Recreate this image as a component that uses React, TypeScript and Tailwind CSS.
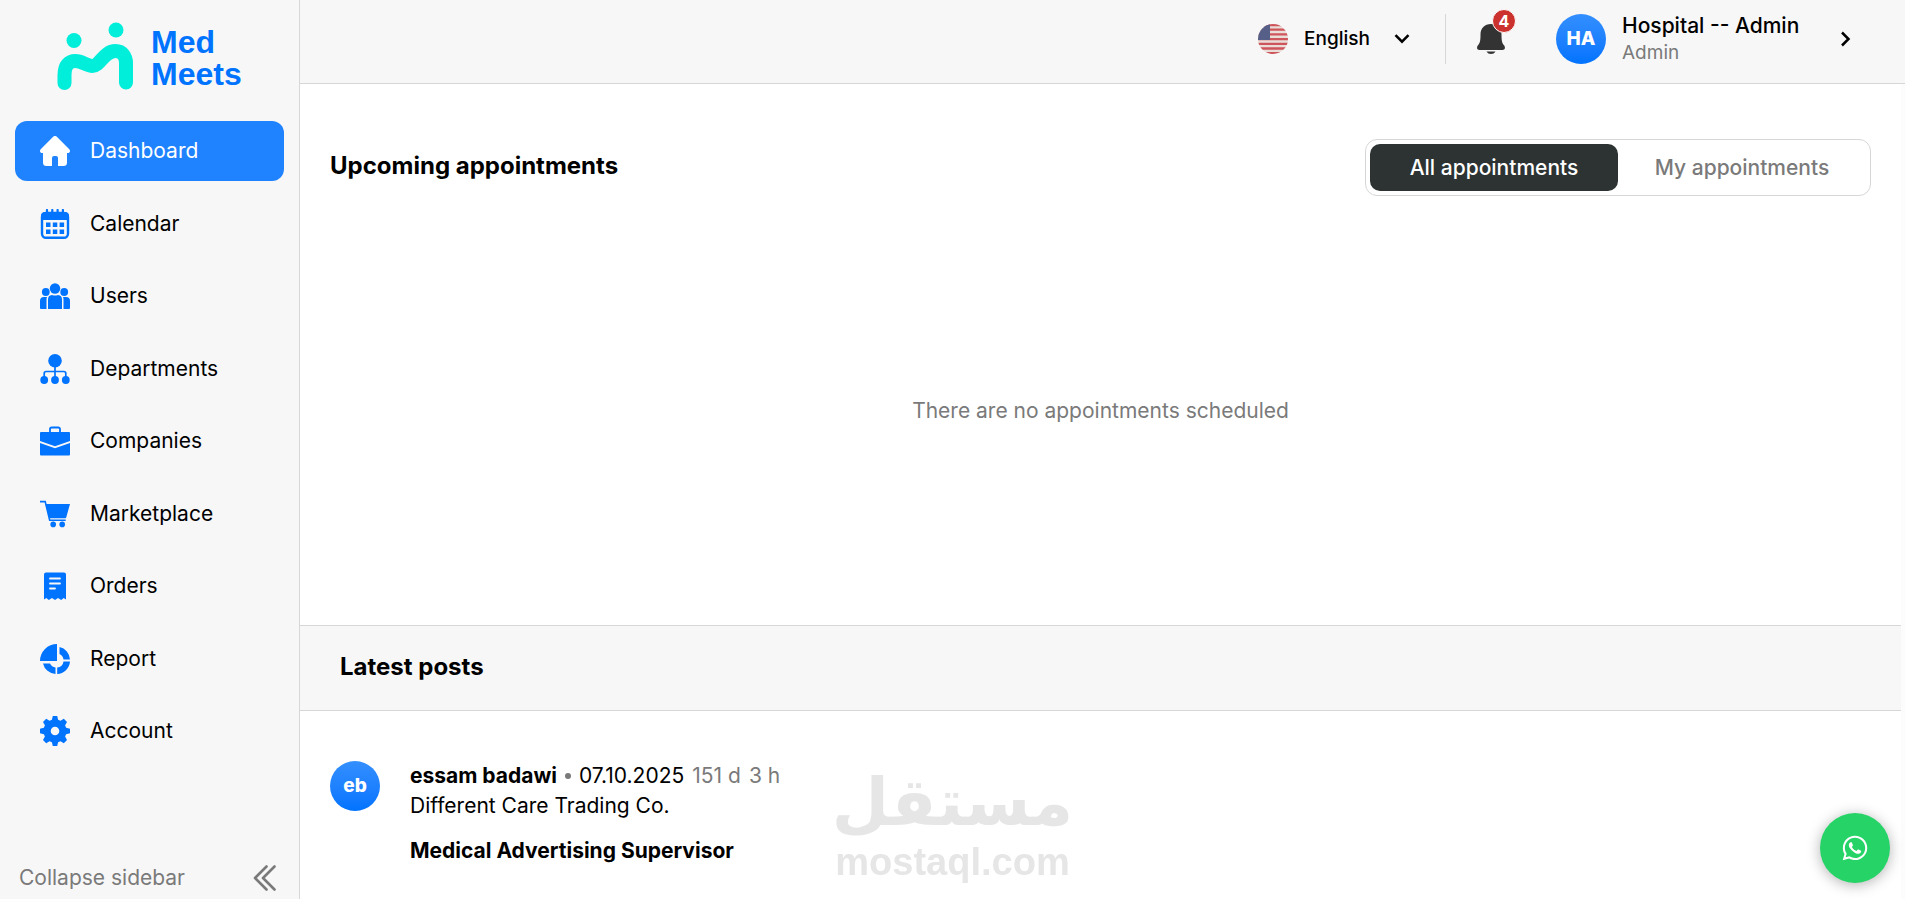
import { useState, type ReactNode } from "react";
import clsx from "clsx";
import { FaWhatsapp } from "react-icons/fa";

type NavItem = {
  id: string;
  label: string;
  icon: ReactNode;
};

type Post = {
  id: number;
  initials: string;
  author: string;
  date: string;
  age: string[];
  company: string;
  title: string;
};

type Tab = "all" | "my";

const tabs: { id: Tab; label: string }[] = [
  { id: "all", label: "All appointments" },
  { id: "my", label: "My appointments" },
];

const posts: Post[] = [
  {
    id: 1,
    initials: "eb",
    author: "essam badawi",
    date: "07.10.2025",
    age: ["151 d", "3 h"],
    company: "Different Care Trading Co.",
    title: "Medical Advertising Supervisor",
  },
];

function Icon({ children }: { children: ReactNode }) {
  return (
    <svg viewBox="0 0 30 30" className="size-[30px] shrink-0" fill="currentColor" aria-hidden="true">
      {children}
    </svg>
  );
}

const navItems: NavItem[] = [
  {
    id: "dashboard",
    label: "Dashboard",
    icon: (
      <Icon>
        <path d="M12.9 1a3 3 0 0 1 4.2 0L29.3 13.3c1.5 1.5.5 3.7-1.5 3.7H27v9.5a3.5 3.5 0 0 1-3.5 3.5H18v-8a2 2 0 0 0-2-2h-2a2 2 0 0 0-2 2v8H6.5A3.5 3.5 0 0 1 3 26.5V17h-.8c-2 0-3-2.2-1.5-3.7z" />
      </Icon>
    ),
  },
  {
    id: "calendar",
    label: "Calendar",
    icon: (
      <Icon>
        <path d="M7 1v4M12.3 1v4M17.6 1v4M22.9 1v4" stroke="currentColor" strokeWidth="2.2" strokeLinecap="round" />
        <rect x="2" y="4" width="26" height="24.8" rx="4" fill="none" stroke="currentColor" strokeWidth="2.4" />
        <path d="M1 11V7a4 4 0 0 1 4-4h20a4 4 0 0 1 4 4v4z" />
        <path d="M6 13.5h4.5v4.5H6zM12.8 13.5h4.5v4.500h-4.500zM19.600 13.500h4.500v4.500h-4.500zM6 20.500h4.500v4.500H6zM12.800 20.500h4.500v4.500h-4.500zM19.600 20.500h4.500v4.500h-4.500z" />
      </Icon>
    ),
  },
  {
    id: "users",
    label: "Users",
    icon: (
      <Icon>
        <circle cx="15" cy="7.5" r="5.2" />
        <circle cx="5.8" cy="11" r="3.9" />
        <circle cx="24.2" cy="11" r="3.9" />
        <path d="M8 28V18.5a4.5 4.5 0 0 1 4-4.5c2 .8 4 .8 6 0a4.5 4.5 0 0 1 4 4.5V28zM6.5 28H1a1 1 0 0 1-1-1v-7a4 4 0 0 1 4-4h3a6 6 0 0 0-.5 2.5zM23.5 28H29a1 1 0 0 0 1-1v-7a4 4 0 0 0-4-4h-3a6 6 0 0 1 .5 2.5z" />
      </Icon>
    ),
  },
  {
    id: "departments",
    label: "Departments",
    icon: (
      <Icon>
        <circle cx="15" cy="6.8" r="6.8" />
        <path d="M15 12v13M4.2 24v-4.5a2 2 0 0 1 2-2h17.6a2 2 0 0 1 2 2V24" fill="none" stroke="currentColor" strokeWidth="1.7" />
        <circle cx="4.2" cy="26" r="3.9" />
        <circle cx="15" cy="26" r="3.9" />
        <circle cx="25.8" cy="26" r="3.9" />
      </Icon>
    ),
  },
  {
    id: "companies",
    label: "Companies",
    icon: (
      <Icon>
        <path d="M10 7V3.2a1.7 1.7 0 0 1 1.7-1.7h6.6A1.7 1.7 0 0 1 20 3.2V7" fill="none" stroke="currentColor" strokeWidth="1.8" />
        <path d="M1 6h28a1 1 0 0 1 1 1v8l-15 5.2L0 15V7a1 1 0 0 1 1-1zM0 17l15 5.2L30 17v11.5a1 1 0 0 1-1 1H1a1 1 0 0 1-1-1z" />
      </Icon>
    ),
  },
  {
    id: "marketplace",
    label: "Marketplace",
    icon: (
      <Icon>
        <path d="M0 2.6h5.2l4.5 18.7h16" fill="none" stroke="currentColor" strokeWidth="1.6" />
        <path d="M5.5 5H30l-3.8 13.5a1 1 0 0 1-1 .8H9.5z" />
        <circle cx="13.2" cy="25.4" r="2.8" />
        <circle cx="22.2" cy="25.4" r="2.8" />
      </Icon>
    ),
  },
  {
    id: "orders",
    label: "Orders",
    icon: (
      <Icon>
        <path d="M6 1.5h18a2 2 0 0 1 2 2v25l-2.3-1.6-2.5 2-3.2-2-3 2-3-2-3.2 2-2.5-2L4 28.5v-25a2 2 0 0 1 2-2z" />
        <path d="M10 7.5h10M10 12.5h10M10 17.5h5" stroke="#f7f7f7" strokeWidth="1.8" strokeLinecap="round" />
      </Icon>
    ),
  },
  {
    id: "report",
    label: "Report",
    icon: (
      <Icon>
        <path d="M17 0v17H0A17 17 0 0 1 17 0z" />
        <path d="M19.5 3A13.5 13.5 0 0 1 30 15.5h-6.5A7 7 0 0 0 19.5 10zM30 17.5A13.5 13.5 0 0 1 17.2 30v-6.5a7 7 0 0 0 6.3-6zM15.500 30A13.500 13.500 0 0 1 3 19.500h7a7 7 0 0 0 5.500 4z" />
      </Icon>
    ),
  },
  {
    id: "account",
    label: "Account",
    icon: (
      <Icon>
        <path
          fillRule="evenodd"
          d="M12.8 0h4.4l.9 3.8 2.4 1 3.3-2L27 5.9l-1.900 3.400 1 2.500 3.900 1v4.400l-3.900 1-1 2.400 1.900 3.500-3.200 3.100-3.300-2-2.400 1-.9 3.800h-4.400l-.9-3.800-2.400-1-3.300 2L3 24.100l1.900-3.500-1-2.400-3.900-1v-4.400l3.900-1 1-2.500L3 5.900l3.200-3.100 3.300 2 2.400-1zM15 10.700a4.300 4.300 0 1 0 0 8.600 4.300 4.300 0 0 0 0-8.600z"
        />
      </Icon>
    ),
  },
];

export default function App() {
  return (
    <div className="flex h-screen overflow-hidden bg-white font-['Inter','Noto_Sans',sans-serif] text-[21px] leading-[30px] text-black">
      <Sidebar />
      <div className="flex min-w-0 flex-1 flex-col">
        <TopBar />
        <main className="min-h-0 flex-1 overflow-hidden bg-[#fcfcfc] pr-1">
          <Appointments />
          <LatestPosts />
        </main>
      </div>
      <Watermark />
      <a
        href="#whatsapp"
        aria-label="WhatsApp"
        className="fixed right-[15px] bottom-4 flex size-[70px] items-center justify-center rounded-full bg-[#25d366] text-white shadow-[0_2px_14px_rgba(0,0,0,0.3)]"
      >
        <FaWhatsapp className="size-7" />
      </a>
    </div>
  );
}

function Sidebar() {
  const [active, setActive] = useState("dashboard");

  return (
    <aside className="flex w-[300px] shrink-0 flex-col border-r border-[#d7d7d7] bg-[#f7f7f7] px-[15px]">
      <a href="#home" className="flex items-center gap-[18px] pt-[22px] pl-[42px] text-[#0073ff]">
        <svg viewBox="57 22 76 68" className="h-[68px] w-[76px]" aria-hidden="true">
          <g fill="#00eeda">
            <circle cx="74" cy="40.5" r="7.5" />
            <circle cx="116" cy="30" r="7.5" />
          </g>
          <path
            d="M64.5 83V75C64.5 65 69 61 75.5 61c7 0 10.5 5 17 5C100 66 104 51 115.5 51 122.5 51 126 57 126 63V82.5"
            fill="none"
            stroke="#00eeda"
            strokeWidth="14"
            strokeLinecap="round"
          />
        </svg>
        <span className="pt-1 font-['Liberation_Sans',sans-serif] text-[32px] leading-8 font-bold">
          Med
          <br />
          Meets
        </span>
      </a>

      <nav className="mt-[31px] flex h-[640px] flex-col justify-between">
        {navItems.map((item) => (
          <a
            key={item.id}
            href={`#${item.id}`}
            onClick={() => setActive(item.id)}
            className={clsx(
              "flex h-[60px] items-center gap-5 rounded-xl pl-[25px]",
              item.id === active && "bg-[#1f82ff]",
            )}
          >
            <span className={clsx(item.id === active ? "text-white" : "text-[#0073ff]")}>
              {item.icon}
            </span>
            <span className={clsx(item.id === active && "text-white")}>{item.label}</span>
          </a>
        ))}
      </nav>

      <button type="button" className="mt-auto flex items-center justify-between pr-2 pb-1.5 pl-1 text-[#7a7a7a]">
        <span>Collapse sidebar</span>
        <svg
          viewBox="0 0 24 28"
          className="h-7 w-6"
          fill="none"
          stroke="currentColor"
          strokeWidth="2.6"
          strokeLinecap="round"
          strokeLinejoin="round"
          aria-hidden="true"
        >
          <path d="M14.500 2.500 3 14l11.500 11.500M22.500 2.500 11 14l11.500 11.500" />
        </svg>
      </button>
    </aside>
  );
}

function TopBar() {
  return (
    <header className="flex h-[84px] shrink-0 items-center justify-end border-b border-[#d7d7d7] bg-[#f7f7f7] pr-[53px] pb-[5px]">
      <div className="flex items-center">
        <Flag />
        <label htmlFor="language" className="sr-only">
          Language
        </label>
        <select
          id="language"
          className="ml-4 w-[90px] appearance-none bg-transparent text-[19px] leading-[30px] font-medium outline-none"
        >
          <option>English</option>
        </select>
        <svg viewBox="0 0 16 10" className="h-2.5 w-4" fill="none" stroke="currentColor" strokeWidth="2.5" aria-hidden="true">
          <path d="M1.5 1.2 8 7.7l6.5-6.5" />
        </svg>
      </div>

      <div className="ml-[35px] h-[50px] w-px bg-[#d7d7d7]" />

      <button type="button" aria-label="Notifications" className="relative ml-[30px] text-[#333]">
        <svg viewBox="0 0 30 30" className="size-[30px]" fill="currentColor" aria-hidden="true">
          <path d="M15 0C8.500 0 4.500 4.500 4.500 10.500c0 6-.5 8.500-2.300 10.500C.3 23 .8 26 3.500 26h23c2.700 0 3.200-3 1.300-5-1.800-2-2.300-4.500-2.300-10.500C25.500 4.500 21.500 0 15 0zM10.500 27.500h9c-1 1.700-2.500 2.500-4.500 2.500s-3.500-.8-4.500-2.500z" />
        </svg>
        <span className="absolute -top-[15px] left-4 flex size-6 items-center justify-center rounded-full border border-white bg-[#cc322d] text-base leading-none font-bold text-white">
          4
        </span>
      </button>

      <button type="button" className="ml-[50px] flex items-center text-left">
        <Avatar initials="HA" />
        <span className="ml-4 w-[214px]">
          <span className="block leading-[27px] font-medium">Hospital -- Admin</span>
          <span className="block text-[19px] leading-[27px] text-[#7a7a7a]">Admin</span>
        </span>
        <svg viewBox="0 0 12 16" className="ml-1 h-4 w-3" fill="none" stroke="currentColor" strokeWidth="2.5" aria-hidden="true">
          <path d="M2 1.5 8.5 8 2 14.5" />
        </svg>
      </button>
    </header>
  );
}

function Flag() {
  return (
    <svg viewBox="0 0 30 30" className="size-[30px]" aria-hidden="true">
      <defs>
        <clipPath id="flag-clip">
          <circle cx="15" cy="15" r="15" />
        </clipPath>
      </defs>
      <g clipPath="url(#flag-clip)">
        <rect width="30" height="30" fill="#eadfd8" />
        <path
          d="M0 1h30M0 5.7h30M0 10.4h30M0 15.1h30M0 19.8h30M0 24.5h30M0 29.2h30"
          stroke="#cf555c"
          strokeWidth="2.3"
        />
        <rect width="12" height="16" fill="#555f88" />
      </g>
    </svg>
  );
}

function Avatar({ initials }: { initials: string }) {
  return (
    <span className="flex size-[50px] shrink-0 items-center justify-center rounded-full bg-linear-to-b from-[#338fff] to-[#0073ff] text-[19px] font-extrabold text-white">
      {initials}
    </span>
  );
}

function Appointments() {
  const [tab, setTab] = useState<Tab>("all");

  return (
    <section className="flex min-h-[541px] flex-col bg-white px-[30px] pt-[55px]">
      <div className="flex items-center justify-between">
        <h2 className="pb-1 text-2xl font-bold">Upcoming appointments</h2>
        <div role="tablist" className="flex rounded-xl border border-[#d7d7d7] p-1">
          {tabs.map(({ id, label }) => (
            <button
              key={id}
              type="button"
              role="tab"
              aria-selected={tab === id}
              onClick={() => setTab(id)}
              className={clsx(
                "h-[47px] w-[248px] rounded-[10px] font-medium",
                tab === id ? "bg-[#2d3333] text-white" : "text-[#7a7a7a]",
              )}
            >
              {label}
            </button>
          ))}
        </div>
      </div>
      <p className="flex flex-1 items-center justify-center text-[#7a7a7a]">
        There are no appointments scheduled
      </p>
    </section>
  );
}

function LatestPosts() {
  return (
    <section className="bg-white">
      <h2 className="border-y border-[#d7d7d7] bg-[#f7f7f7] px-10 pt-[26px] pb-7 text-2xl leading-[30px] font-bold">
        Latest posts
      </h2>
      {posts.map((post) => (
        <article key={post.id} className="flex gap-[30px] px-[30px] pt-[50px] pb-20">
          <Avatar initials={post.initials} />
          <div>
            <div className="flex items-center gap-2">
              <span className="font-bold">{post.author}</span>
              <span className="size-1.5 rounded-full bg-[#7a7a7a]" />
              <time>{post.date}</time>
              {post.age.map((part) => (
                <span key={part} className="text-[#7a7a7a]">
                  {part}
                </span>
              ))}
            </div>
            <p>{post.company}</p>
            <h3 className="mt-[15px] font-bold">{post.title}</h3>
          </div>
        </article>
      ))}
    </section>
  );
}

function Watermark() {
  return (
    <div className="pointer-events-none fixed inset-x-0 bottom-4 flex flex-col items-center font-bold text-[#e6e6e6]">
      <span lang="ar" dir="rtl" className="font-['DejaVu_Sans',sans-serif] text-[66px] leading-[76px]">
        مستقل
      </span>
      <span className="font-['Liberation_Sans',sans-serif] text-[38px] leading-[42px]">mostaql.com</span>
    </div>
  );
}
